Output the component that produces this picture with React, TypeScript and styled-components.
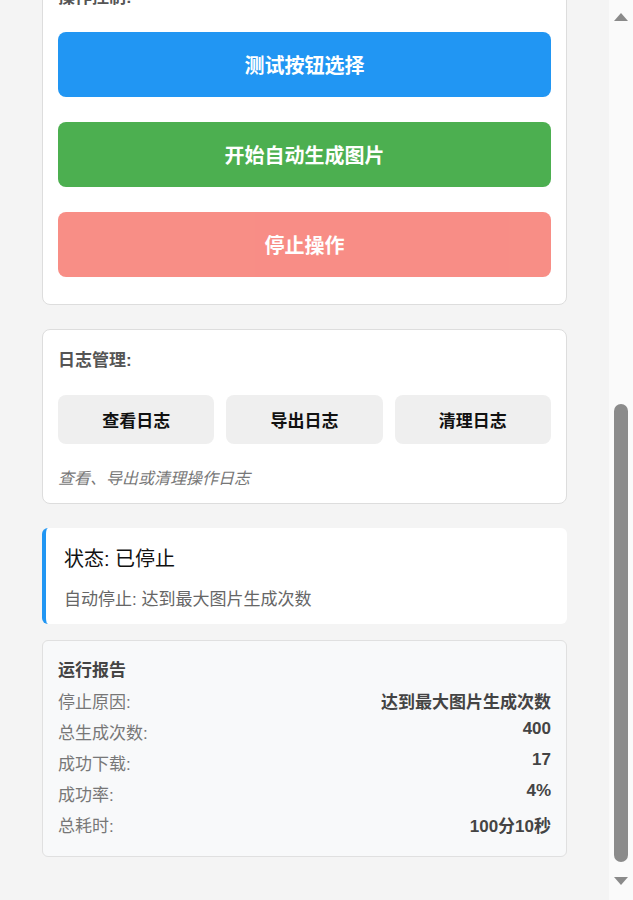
import React, { useLayoutEffect, useRef } from "react";
import styled, { createGlobalStyle } from "styled-components";

const GlobalStyle = createGlobalStyle`
  html, body {
    margin: 0;
    height: 100%;
    overflow: hidden;
  }
  body {
    background: #f4f4f4;
    font-family: "Liberation Sans", "Noto Sans CJK SC", sans-serif;
  }
  * {
    box-sizing: border-box;
  }
`;

// 窗口：内容区 + 右侧滚动条
const Frame = styled.div`
  display: flex;
  height: 100vh;
  background: #f4f4f4;
`;

const Viewport = styled.div`
  flex: 1;
  overflow: hidden;
`;

const ScrollBar = styled.div`
  width: 24px;
  flex-shrink: 0;
  display: flex;
  flex-direction: column;
  align-items: center;
  padding: 13px 0 15px;
  background: #fafafa;
`;

const Arrow = styled.div<{ $dir: "up" | "down" }>`
  width: 0;
  height: 0;
  border-left: 7.5px solid transparent;
  border-right: 7.5px solid transparent;
  ${(p) =>
    p.$dir === "up"
      ? "border-bottom: 8px solid #8a8a8a;"
      : "border-top: 8px solid #8a8a8a;"}
`;

const Thumb = styled.div`
  width: 14px;
  height: 458px;
  margin: auto 0 15px;
  border-radius: 7px;
  background: #8b8b8b;
`;

const Container = styled.main`
  padding: 20px 42px 43px;
`;

const Header = styled.header`
  margin-bottom: 24px;
`;

const AppTitle = styled.h1`
  margin: 0 0 8px;
  font-size: 26px;
  color: #333;
`;

const AppSubtitle = styled.p`
  margin: 0;
  font-size: 15px;
  color: #777;
`;

const Card = styled.section<{ $bottom?: number }>`
  background: #fff;
  border: 1px solid #ddd;
  border-radius: 8px;
  padding: 16px 15px ${(p) => p.$bottom ?? 16}px;
  margin-bottom: 24px;
`;

const CardTitle = styled.div`
  font-size: 17px;
  font-weight: 700;
  color: #555;
  margin-bottom: 24px;
`;

const FieldList = styled.div`
  display: flex;
  flex-direction: column;
  gap: 16px;
`;

const Field = styled.label`
  display: flex;
  flex-direction: column;
  gap: 6px;
  font-size: 15px;
  color: #555;
`;

const TextInput = styled.input`
  height: 40px;
  padding: 0 10px;
  border: 1px solid #ccc;
  border-radius: 6px;
  font-family: inherit;
  font-size: 15px;
`;

const PromptInput = styled.textarea`
  height: 96px;
  padding: 8px 10px;
  border: 1px solid #ccc;
  border-radius: 6px;
  font-family: inherit;
  font-size: 15px;
  resize: none;
`;

const ActionList = styled.div`
  display: flex;
  flex-direction: column;
  gap: 25px;
`;

const toneColors = {
  blue: "#2196f3",
  green: "#4caf50",
  red: "#f44336",
};

const ActionButton = styled.button<{ $tone: keyof typeof toneColors }>`
  display: block;
  width: 100%;
  padding: 18px;
  border: none;
  border-radius: 8px;
  background: ${(p) => toneColors[p.$tone]};
  color: #fff;
  font-family: inherit;
  font-size: 20px;
  font-weight: 700;
  line-height: normal;
  cursor: pointer;

  &:disabled {
    opacity: 0.6;
    cursor: not-allowed;
  }
`;

const LogButtons = styled.div`
  display: flex;
  gap: 12px;
`;

const LogButton = styled.button`
  flex: 1;
  padding: 12px;
  border: none;
  border-radius: 8px;
  background: #efefef;
  color: #111;
  font-family: inherit;
  font-size: 17px;
  font-weight: 700;
  line-height: normal;
  cursor: pointer;
`;

const Hint = styled.p`
  margin: 21px 0 0;
  font-size: 16px;
  font-style: italic;
  color: #777;
`;

const StatusBox = styled.div`
  background: #fff;
  border-left: 4px solid #2196f3;
  border-radius: 6px;
  padding: 15px 18px 14px;
  margin-bottom: 16px;
`;

const StatusText = styled.div`
  font-size: 20px;
  color: #111;
  margin-bottom: 13px;
`;

const StatusDetail = styled.div`
  font-size: 17px;
  color: #666;
`;

const Report = styled.section`
  background: #f8f9fa;
  border: 1px solid #e0e0e0;
  border-radius: 6px;
  padding: 15px 15px 19px;
`;

const ReportTitle = styled.div`
  font-size: 17px;
  font-weight: 700;
  color: #444;
  margin-bottom: 7px;
`;

const ReportRows = styled.div`
  display: flex;
  flex-direction: column;
  gap: 6px;
`;

const ReportRow = styled.div`
  display: flex;
  justify-content: space-between;
  align-items: flex-start;
  font-size: 17px;
`;

const ReportLabel = styled.span`
  color: #777;
`;

const ReportValue = styled.span`
  color: #444;
  font-weight: 700;
`;

const report = [
  { label: "停止原因:", value: "达到最大图片生成次数" },
  { label: "总生成次数:", value: "400" },
  { label: "成功下载:", value: "17" },
  { label: "成功率:", value: "4%" },
  { label: "总耗时:", value: "100分10秒" },
];

export default function App() {
  const viewportRef = useRef<HTMLDivElement>(null);

  // 页面已滚动到底部
  useLayoutEffect(() => {
    const el = viewportRef.current;
    if (el) el.scrollTop = el.scrollHeight;
  }, []);

  return (
    <>
      <GlobalStyle />
      <Frame>
        <Viewport ref={viewportRef}>
          <Container>
            <Header>
              <AppTitle>图片自动生成助手</AppTitle>
              <AppSubtitle>自动点击生成按钮并下载生成的图片</AppSubtitle>
            </Header>

            {/* 参数设置 */}
            <Card>
              <CardTitle>参数设置:</CardTitle>
              <FieldList>
                <Field>
                  最大生成次数
                  <TextInput defaultValue="400" />
                </Field>
                <Field>
                  生成间隔 (秒)
                  <TextInput defaultValue="15" />
                </Field>
                <Field>
                  下载等待时间 (秒)
                  <TextInput defaultValue="5" />
                </Field>
                <Field>
                  下载目录
                  <TextInput defaultValue="downloads/images" />
                </Field>
                <Field>
                  提示词
                  <PromptInput defaultValue="一只在草地上奔跑的小狗，阳光明媚" />
                </Field>
              </FieldList>
            </Card>

            {/* 操作控制 */}
            <Card $bottom={27}>
              <CardTitle>操作控制:</CardTitle>
              <ActionList>
                <ActionButton $tone="blue">测试按钮选择</ActionButton>
                <ActionButton $tone="green">开始自动生成图片</ActionButton>
                <ActionButton $tone="red" disabled>
                  停止操作
                </ActionButton>
              </ActionList>
            </Card>

            {/* 日志管理 */}
            <Card $bottom={14}>
              <CardTitle>日志管理:</CardTitle>
              <LogButtons>
                <LogButton>查看日志</LogButton>
                <LogButton>导出日志</LogButton>
                <LogButton>清理日志</LogButton>
              </LogButtons>
              <Hint>查看、导出或清理操作日志</Hint>
            </Card>

            <StatusBox>
              <StatusText>状态: 已停止</StatusText>
              <StatusDetail>自动停止: 达到最大图片生成次数</StatusDetail>
            </StatusBox>

            <Report>
              <ReportTitle>运行报告</ReportTitle>
              <ReportRows>
                {report.map((row) => (
                  <ReportRow key={row.label}>
                    <ReportLabel>{row.label}</ReportLabel>
                    <ReportValue>{row.value}</ReportValue>
                  </ReportRow>
                ))}
              </ReportRows>
            </Report>
          </Container>
        </Viewport>

        <ScrollBar aria-hidden>
          <Arrow $dir="up" />
          <Thumb />
          <Arrow $dir="down" />
        </ScrollBar>
      </Frame>
    </>
  );
}
